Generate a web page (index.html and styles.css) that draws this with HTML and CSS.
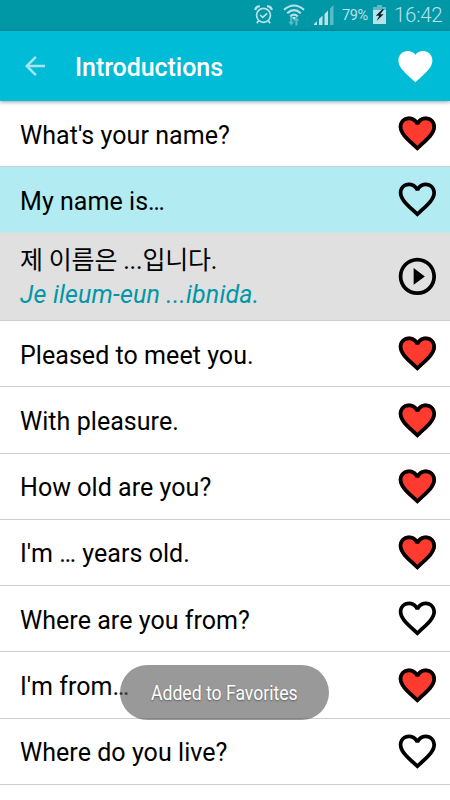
FILE: index.html
```html
<!DOCTYPE html>
<html lang="en">
<head>
<meta charset="utf-8">
<title>Introductions</title>
<link rel="stylesheet" href="styles.css">
</head>
<body>
<svg class="defs" aria-hidden="true">
  <symbol id="heart" viewBox="0 0 24 24"><path d="M12 21.35l-1.45-1.32C5.4 15.36 2 12.28 2 8.5 2 5.42 4.42 3 7.5 3c1.74 0 3.41.81 4.5 2.09C13.09 3.81 14.76 3 16.5 3 19.58 3 22 5.42 22 8.5c0 3.78-3.4 6.86-8.55 11.54L12 21.35z"/></symbol>
  <symbol id="outline" viewBox="0 0 24 24"><path d="M16.5 3c-1.74 0-3.41.81-4.5 2.09C10.91 3.81 9.24 3 7.5 3 4.42 3 2 5.42 2 8.5c0 3.78 3.4 6.86 8.55 11.54L12 21.35l1.45-1.32C18.6 15.36 22 12.28 22 8.5 22 5.42 19.58 3 16.5 3zm-4.4 15.55l-.1.1-.1-.1C7.14 14.24 4 11.39 4 8.5 4 6.5 5.5 5 7.5 5c1.54 0 3.04.99 3.57 2.36h1.87C13.46 5.99 14.96 5 16.5 5c2 0 3.5 1.5 3.5 3.5 0 2.89-3.14 5.74-7.9 10.05z"/></symbol>
  <symbol id="favorite" viewBox="0 0 24 24"><use href="#heart" fill="#ff3b2f"/><use href="#outline"/></symbol>
  <symbol id="play" viewBox="0 0 24 24"><path d="M10 16.5l6-4.5-6-4.5v9zM12 2C6.48 2 2 6.48 2 12s4.48 10 10 10 10-4.48 10-10S17.52 2 12 2zm0 18c-4.41 0-8-3.59-8-8s3.59-8 8-8 8 3.59 8 8-3.59 8-8 8z"/></symbol>
</svg>
<div class="screen">
  <div class="status">
    <svg class="alarm" viewBox="0 0 20 21"><g fill="none" stroke="currentColor"><circle cx="10" cy="11.4" r="7.3" stroke-width="1.8"/><path d="M6.4 11l2.8 2.6 4.6-4.2" stroke-width="1.7"/><path d="M1.2 5.8A5.5 5.5 0 0 1 6.2 1.6M18.8 5.8A5.5 5.5 0 0 0 13.8 1.6" stroke-width="2.4"/><path d="M4.8 17l-1.8 2.6M15.2 17l1.8 2.6" stroke-width="1.8"/></g></svg>
    <svg class="wifi" viewBox="0 0 22 22"><path class="dim" d="M7.2 13h2v4.8h2L8.2 21.6 5.2 17.8h2zM14.4 21.6h-2v-4.8h-2l3-3.8 3 3.8h-2z"/><g fill="none" stroke="currentColor" stroke-width="2.1"><path d="M1 5.8Q11-2.8 21 5.8"/><path d="M4.2 9.2Q11 3.2 17.8 9.2"/><path d="M7.2 12.4Q11 8.8 14.8 12.4"/></g><path d="M9 13.6Q11 12 13 13.6L11 16z" fill="currentColor"/></svg>
    <svg class="signal" viewBox="0 0 21 20"><path fill="currentColor" d="M1 20v-1l3-3v4zM6 20v-6l3.5-3.5V20zM11.5 20V9L15 5.5V20z"/><path class="dim" d="M17 20V3.5L20.5 0v20z"/></svg>
    <span class="percent">79%</span>
    <svg class="battery" viewBox="0 0 13 19"><path class="dim" d="M4 0h5v2h4v4H0V2h4z"/><path fill="currentColor" d="M0 5h13v14H0z"/><path d="M9.6 4L2.8 10.8h3.4L3.6 16l7-6.8H7.2L11 4.6z" fill="#04262b"/></svg>
    <span class="clock">16:42</span>
  </div>
  <header class="bar">
    <svg class="back" viewBox="0 0 24 24"><path d="M20 11H7.83l5.59-5.59L12 4l-8 8 8 8 1.41-1.41L7.83 13H20v-2z"/></svg>
    <h1 class="title">Introductions</h1>
    <svg class="fav"><use href="#heart"/></svg>
  </header>
  <main class="list">
    <div class="row first"><span>What's your name?</span><svg class="icon"><use href="#favorite"/></svg></div>
    <div class="row selected"><span>My name is…</span><svg class="icon"><use href="#outline"/></svg></div>
    <div class="answer">
      <div class="phrase"><div class="korean" lang="ko">제 이름은 ...입니다.</div><div class="roman">Je ileum-eun ...ibnida.</div></div>
      <svg class="icon"><use href="#play"/></svg>
    </div>
    <div class="row"><span>Pleased to meet you.</span><svg class="icon"><use href="#favorite"/></svg></div>
    <div class="row"><span>With pleasure.</span><svg class="icon"><use href="#favorite"/></svg></div>
    <div class="row"><span>How old are you?</span><svg class="icon"><use href="#favorite"/></svg></div>
    <div class="row"><span>I'm … years old.</span><svg class="icon"><use href="#favorite"/></svg></div>
    <div class="row"><span>Where are you from?</span><svg class="icon"><use href="#outline"/></svg></div>
    <div class="row"><span>I'm from…</span><svg class="icon"><use href="#favorite"/></svg></div>
    <div class="row"><span>Where do you live?</span><svg class="icon"><use href="#outline"/></svg></div>
  </main>
  <div class="toast"><span class="toast-text">Added to Favorites</span></div>
</div>
</body>
</html>
```

FILE: styles.css
```css
* { box-sizing: border-box; }
body { margin: 0; background: #fff; font-family: Roboto, "Noto Sans CJK KR", sans-serif; color: #000; }
.defs { position: absolute; width: 0; height: 0; }
.screen { position: relative; width: 450px; height: 800px; overflow: hidden; }

.status { display: flex; align-items: center; height: 31px; padding-left: 254px; background: #0097a7; color: #b9e2e7; white-space: nowrap; }
.status svg { flex: none; }
.dim { fill: #5bbac5; }
.alarm { width: 19px; height: 21px; margin-top: -3px; }
.wifi { width: 22px; height: 22px; margin: -2px 0 0 10px; }
.signal { width: 21px; height: 20px; margin: -1px 0 0 8px; }
.percent { width: 27px; margin: -1px 0 0 8px; font-size: 14.5px; letter-spacing: -.4px; }
.battery { width: 13px; height: 19px; margin: -3px 0 0 4px; }
.clock { margin: -1px 0 0 8px; font-size: 20.5px; font-weight: 300; letter-spacing: -.3px; }

.bar { position: relative; display: flex; align-items: center; height: 70px; padding: 0 14.6px 0 20px; background: #00bcd7; box-shadow: 0 1px 4px rgba(0, 0, 0, .4); z-index: 1; }
.back { width: 30px; height: 30px; fill: #a6e5ef; }
.title { flex: 1; margin: 3px 0 0 25px; font-size: 25px; font-weight: 500; letter-spacing: -.06px; color: #fff; }
.fav { width: 40.8px; height: 40.8px; fill: #fff; }

.row, .answer { display: flex; align-items: center; justify-content: space-between; padding: 0 10px 0 20px; border-bottom: 1px solid #cdcdcd; }
.row { height: 66.25px; font-size: 25px; letter-spacing: .05px; }
.row span { padding-top: 3px; }
.first { height: 66px; }
.selected { height: 66px; background: #b2ebf2; border-bottom-color: #cfe4e6; }
.answer { height: 88px; background: #e0e0e0; }
.icon { flex: none; width: 44.75px; height: 44.75px; }
.phrase { padding-top: 3px; }
.korean { font-size: 25px; line-height: 34px; letter-spacing: -.2px; }
.roman { font-size: 25px; line-height: 34px; font-style: italic; letter-spacing: .17px; color: #0097a7; }

.toast { position: absolute; left: 120px; top: 665px; width: 209px; height: 55px; display: flex; align-items: center; justify-content: center; border-radius: 28px; background: rgba(85, 85, 85, .6); z-index: 2; }
.toast-text { font-size: 20px; color: #fff; white-space: nowrap; text-shadow: 0 1px 2px rgba(0, 0, 0, .4); transform: scaleX(.88); }
```
